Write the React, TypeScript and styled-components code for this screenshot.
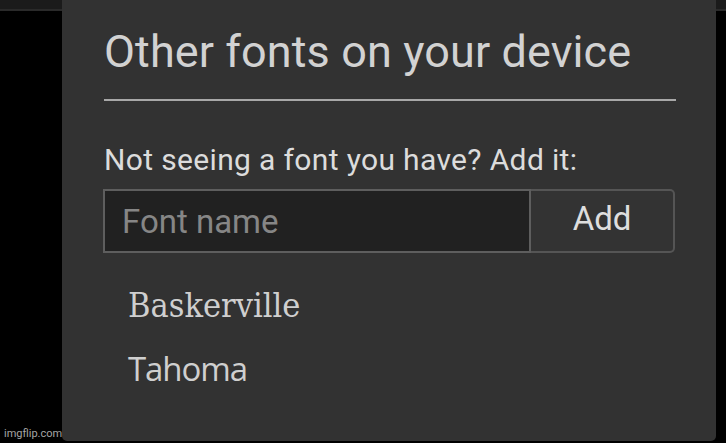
import React from "react";
import styled, { createGlobalStyle } from "styled-components";

const Global = createGlobalStyle`
  html, body { margin: 0; padding: 0; background: #000; }
  body { width: 726px; height: 443px; overflow: hidden; }
`;

const Page = styled.div`
  position: relative;
  width: 726px;
  height: 443px;
  background: linear-gradient(#1b1b1b 0, #1b1b1b 9px, #2a2a2a 9px, #2a2a2a 11px, #000 11px);
  display: flex;
`;

const Panel = styled.div`
  margin-left: 62px;
  width: 654px;
  height: 441px;
  background: #323232;
  border-radius: 0 0 5px 5px;
  box-sizing: border-box;
  padding: 0 40px 0 42px;
  display: flex;
  flex-direction: column;
  font-family: Roboto, "Noto Sans", sans-serif;
`;

const Heading = styled.h1`
  margin: 29px 0 0 0;
  font-size: 45px;
  line-height: 45px;
  font-weight: 400;
  color: #d2d2d2;
  letter-spacing: 0.1px;
  white-space: nowrap;
`;

const Divider = styled.div`
  margin-top: 25px;
  height: 2px;
  background: #a8a8a8;
`;

const Label = styled.div`
  margin-top: 44px;
  font-size: 30px;
  line-height: 29px;
  color: #dcdcdc;
  letter-spacing: 0.35px;
  white-space: nowrap;
`;

const Row = styled.div`
  margin-top: 15px;
  display: flex;
  height: 64px;
  margin-left: -1px;
  width: 572px;
`;

const Input = styled.input`
  box-sizing: border-box;
  width: 428px;
  height: 64px;
  background: #212121;
  border: 2px solid #5e5e5e;
  padding: 0 0 0 17px;
  font-family: Roboto, "Noto Sans", sans-serif;
  font-size: 33px;
  color: #ddd;
  outline: none;
  &::placeholder { color: #868686; }
`;

const Button = styled.button`
  box-sizing: border-box;
  flex: 1;
  height: 64px;
  background: #333;
  border: 2px solid #555;
  border-left: none;
  border-radius: 0 5px 5px 0;
  font-family: Roboto, "Noto Sans", sans-serif;
  font-size: 33px;
  color: #dedede;
  padding: 0 0 6px 0;
`;

const List = styled.div`
  margin-top: 21px;
  padding-left: 24px;
  display: flex;
  flex-direction: column;
`;

const Item = styled.div<{ $serif?: boolean }>`
  height: 63px;
  line-height: 63px;
  font-size: ${(p) => (p.$serif ? "34px" : "33px")};
  font-family: ${(p) => (p.$serif ? '"DejaVu Serif", serif' : '"Open Sans", sans-serif')};
  font-stretch: ${(p) => (p.$serif ? "85%" : "100%")};
  letter-spacing: ${(p) => (p.$serif ? "0" : "-1.1px")};
  color: #cfcfcf;
  white-space: nowrap;
`;

const Watermark = styled.div`
  position: absolute;
  left: 4px;
  bottom: 3px;
  font-family: Roboto, sans-serif;
  font-size: 11px;
  color: #a5a5a5;
`;

export default function App() {
  return (
    <>
      <Global />
      <Page>
        <Panel>
          <Heading>Other fonts on your device</Heading>
          <Divider />
          <Label>Not seeing a font you have? Add it:</Label>
          <Row>
            <Input placeholder="Font name" />
            <Button>Add</Button>
          </Row>
          <List>
            <Item $serif>Baskerville</Item>
            <Item>Tahoma</Item>
          </List>
        </Panel>
        <Watermark>imgflip.com</Watermark>
      </Page>
    </>
  );
}
